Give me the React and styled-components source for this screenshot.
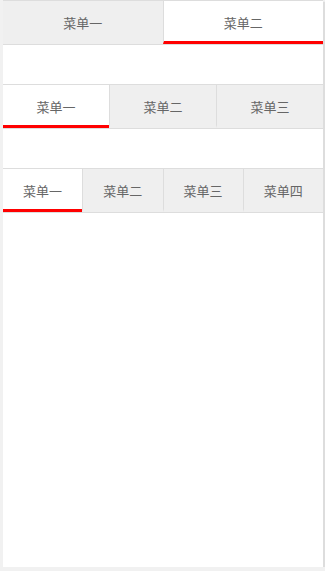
import React, { useState } from 'react';
import styled, { createGlobalStyle } from 'styled-components';

const GlobalStyle = createGlobalStyle`
  html, body {
    margin: 0;
    padding: 0;
    background: #f1f1f1;
  }
  body {
    font-family: "Noto Sans CJK SC", "Liberation Sans", sans-serif;
  }
`;

const Page = styled.div`
  width: 320px;
  height: 567px;
  margin-left: 3px;
  background: #fff;
  box-shadow: 2px 2px 1px #dddddd;
`;

const TabBar = styled.nav`
  display: flex;
  border-top: 1px solid #dddddd;
  border-bottom: 1px solid #dddddd;
  margin-bottom: 39px;
`;

const Tab = styled.div`
  flex: 1;
  box-sizing: border-box;
  height: 43px;
  display: flex;
  align-items: center;
  justify-content: center;
  font-size: 13px;
  color: #666;
  cursor: pointer;
  background: ${(p) => (p.$active ? '#fff' : '#efefef')};
  border-bottom: 3px solid ${(p) => (p.$active ? '#ff0000' : 'transparent')};
  padding-top: 3px;

  & + & {
    border-left: 1px solid #dddddd;
  }
`;

function Tabs({ items, initial }) {
  const [active, setActive] = useState(initial);
  return (
    <TabBar>
      {items.map((label, i) => (
        <Tab key={label} $active={i === active} onClick={() => setActive(i)}>
          {label}
        </Tab>
      ))}
    </TabBar>
  );
}

export default function App() {
  return (
    <>
      <GlobalStyle />
      <Page>
        <Tabs items={['菜单一', '菜单二']} initial={1} />
        <Tabs items={['菜单一', '菜单二', '菜单三']} initial={0} />
        <Tabs items={['菜单一', '菜单二', '菜单三', '菜单四']} initial={0} />
      </Page>
    </>
  );
}
